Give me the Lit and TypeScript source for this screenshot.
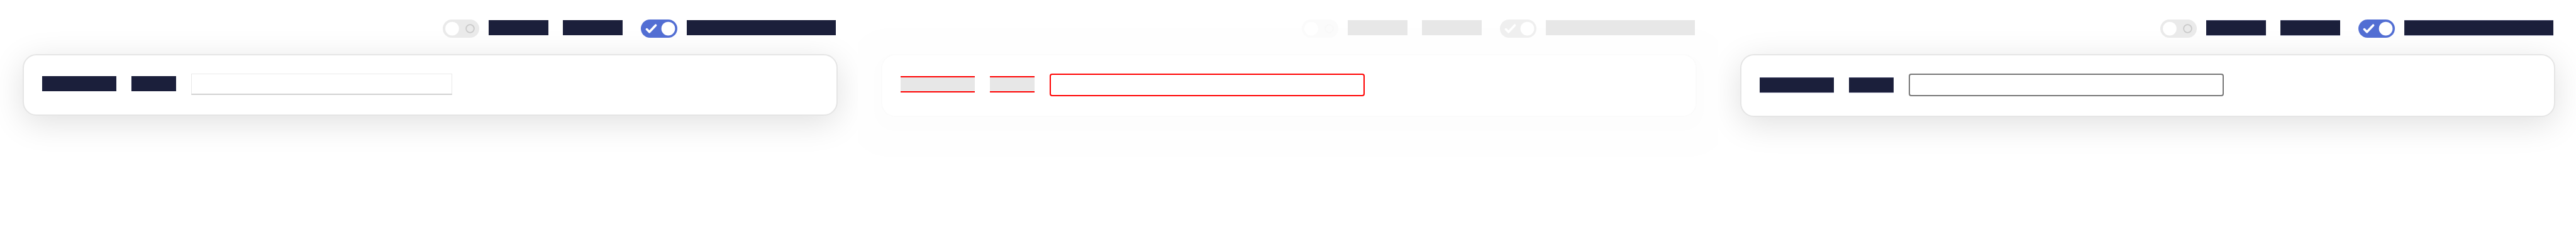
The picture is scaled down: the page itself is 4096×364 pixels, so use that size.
import { LitElement, html, css, svg } from "lit";
import { customElement, property } from "lit/decorators.js";

type Variant = "base" | "diff" | "next";

@customElement("toggle-switch")
class ToggleSwitch extends LitElement {
  @property({ type: Boolean }) checked = false;
  @property() variant: Variant = "base";
  @property({ type: Array }) words: number[] = [];

  static styles = css`
    :host {
      display: block;
      --track: #eaeaea;
      --ring: #cacaca;
      --on: #526ed3;
      --ink: #1b1f3b;
    }
    :host([variant="diff"]) {
      --track: #fbfbfb;
      --ring: #f8f8f8;
      --on: #efefef;
      --ink: #e7e7e7;
    }
    .toggle {
      display: flex;
      align-items: flex-start;
      gap: 15px;
    }
    .control {
      display: grid;
      width: 58px;
      height: 29px;
    }
    .control > * {
      grid-area: 1 / 1;
    }
    .box {
      appearance: none;
      margin: 0;
      border-radius: 15px;
      background: var(--track);
    }
    .box:checked {
      background: var(--on);
    }
    .glyphs {
      width: 58px;
      height: 29px;
      pointer-events: none;
    }
    .ring {
      fill: none;
      stroke: var(--ring);
      stroke-width: 2;
    }
    .tick {
      fill: none;
      stroke: #fff;
      stroke-width: 4;
      stroke-linecap: round;
      stroke-linejoin: round;
    }
    .knob {
      fill: #fff;
    }
    .words {
      display: flex;
      gap: 23px;
      padding-top: 1px;
    }
    .word {
      height: 24px;
      background: var(--ink);
    }
    :host([variant="next"]) .word {
      height: 23px;
      border-top: 1px solid #45486a;
      border-bottom: 1px solid #b9bbd0;
    }
  `;

  render() {
    return html`
      <label class="toggle">
        <span class="control">
          <input class="box" type="checkbox" role="switch" .checked=${this.checked} />
          <svg class="glyphs" viewBox="0 0 64 32" aria-hidden="true">
            ${this.checked
              ? svg`<path class="tick" d="M10.4 17.2 L15 21.8 L26 10.2" />
                  <circle class="knob" cx="48" cy="16" r="12" />`
              : svg`<circle class="knob" cx="16.5" cy="16" r="12" />
                  <circle class="ring" cx="48" cy="16" r="7" />`}
          </svg>
        </span>
        <span class="words">
          ${this.words.map((w) => html`<span class="word" style="width:${w}px"></span>`)}
        </span>
      </label>
    `;
  }
}

@customElement("form-panel")
class FormPanel extends LitElement {
  @property({ reflect: true }) variant: Variant = "base";

  static styles = css`
    :host {
      display: block;
      overflow: hidden;
      min-width: 0;
    }
    .panel {
      position: relative;
      display: flex;
      flex-direction: column;
      padding: 31px 33px 0 36px;
    }
    .header {
      display: flex;
      justify-content: flex-end;
      gap: 29px;
      height: 29px;
      padding-right: 3px;
      margin-bottom: 26px;
      z-index: 1;
    }
    .card {
      border: 2px solid #e5e5e5;
      border-radius: 22px;
      background: #fff;
      padding: 29px 29px 31px;
      box-shadow: 0 11px 51px rgba(0, 0, 0, 0.125);
    }
    .field {
      display: flex;
      align-items: flex-start;
      gap: 24px;
      min-height: 34px;
    }
    .label {
      display: flex;
      gap: 24px;
      padding-top: 4px;
    }
    .word {
      box-sizing: border-box;
      height: 24px;
      background: #1b1f3b;
    }
    .long {
      width: 118px;
    }
    .short {
      width: 71px;
    }
    .entry {
      box-sizing: border-box;
      width: 415px;
      height: 33px;
      margin: 0;
      padding: 0 8px;
      border: 1px solid #e9e9e9;
      border-bottom-color: #c4c4c4;
      background: #fff;
      box-shadow: 0 1px 0 #dedede;
      font: 16px "Liberation Sans", sans-serif;
      outline: none;
    }
    :host([variant="next"]) .label {
      padding-top: 6px;
    }
    :host([variant="next"]) .word {
      height: 25px;
      border-top: 1px solid #45486a;
      border-bottom: 1px solid #cfd0df;
    }
    :host([variant="next"]) .entry,
    :host([variant="diff"]) .entry {
      width: 501px;
      height: 36px;
      border: 2px solid #767676;
      border-radius: 4px;
      box-shadow: none;
    }
    :host([variant="diff"]) .entry {
      border-color: #f00;
    }
    :host([variant="diff"]) .word {
      height: 26px;
      background: #e7e7e7;
      border-top: 2px solid #f00;
      border-bottom: 2px solid #f00;
    }
    :host([variant="diff"]) .card {
      border-color: #fbfbfb;
      box-shadow:
        0 11px 0 11px #fdfdfd,
        0 11px 0 52px #fefefe;
    }
  `;

  render() {
    return html`
      <section class="panel">
        <div class="header">
          <toggle-switch variant=${this.variant} .words=${[95, 95]}></toggle-switch>
          <toggle-switch variant=${this.variant} .words=${[237]} checked></toggle-switch>
        </div>
        <div class="card">
          <div class="field">
            <label class="label" for="entry">
              <span class="word long"></span>
              <span class="word short"></span>
            </label>
            <input class="entry" id="entry" type="text" />
          </div>
        </div>
      </section>
    `;
  }
}

@customElement("app-root")
class AppRoot extends LitElement {
  static styles = css`
    :host {
      display: block;
      background: #fff;
    }
    .row {
      display: grid;
      grid-template-columns: repeat(3, minmax(0, 1fr));
      min-height: 100vh;
    }
  `;

  render() {
    return html`
      <main class="row">
        <form-panel variant="base"></form-panel>
        <form-panel variant="diff"></form-panel>
        <form-panel variant="next"></form-panel>
      </main>
    `;
  }
}
